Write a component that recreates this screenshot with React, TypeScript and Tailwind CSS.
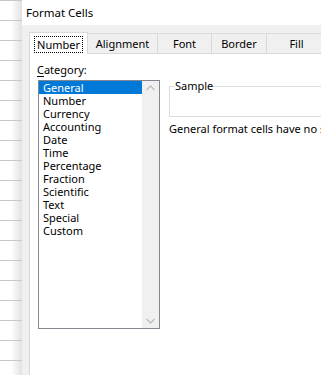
import React from 'react';

const categories = [
  'General', 'Number', 'Currency', 'Accounting', 'Date', 'Time',
  'Percentage', 'Fraction', 'Scientific', 'Text', 'Special', 'Custom',
];

const tabs = [
  { label: 'Number', w: 'w-[59px]' },
  { label: 'Alignment', w: 'w-[70px]' },
  { label: 'Font', w: 'w-[54px]' },
  { label: 'Border', w: 'w-[55px]' },
  { label: 'Fill', w: 'w-[60px]' },
];

const font = { fontFamily: '"Noto Sans", "Open Sans", sans-serif' };

export default function App() {
  return (
    <div className="w-[321px] h-[375px] flex overflow-hidden bg-white text-[11px] text-black" style={font}>
      {/* sheet behind the dialog */}
      <div className="w-[22px] shrink-0 flex flex-col bg-gradient-to-r from-white from-50% to-[#e2e2e2]">
        <div className="h-[3px] border-b border-[#c8c8c8]" />
        {Array.from({ length: 19 }).map((_, i) => (
          <div key={i} className="h-[20px] shrink-0 border-b border-[#c8c8c8]" />
        ))}
      </div>

      <div className="flex-1 flex flex-col min-w-0">
        {/* title bar */}
        <div className="h-[25px] shrink-0 bg-white pl-[4px] flex items-center text-[11.5px] leading-none">
          Format Cells
        </div>

        <div className="flex-1 flex flex-col bg-[#f0f0f0] pl-[7px] pt-[7px] min-h-0">
          {/* tab strip */}
          <div className="flex items-end h-[21px] shrink-0">
            {tabs.map((t, i) =>
              i === 0 ? (
                <div
                  key={t.label}
                  className={`${t.w} h-[22px] -mb-px relative z-10 bg-white border border-b-0 border-[#d9d9d9] flex items-start justify-center pt-[3px] shrink-0`}
                >
                  <span className="border border-dotted border-black px-[2px] h-[17px] flex items-center leading-none">
                    {t.label}
                  </span>
                </div>
              ) : (
                <div
                  key={t.label}
                  className={`${t.w} h-[20px] bg-[#f0f0f0] border-t border-r border-[#d9d9d9] flex items-center justify-center shrink-0 leading-none`}
                >
                  {t.label}
                </div>
              )
            )}
          </div>

          {/* tab page */}
          <div className="flex-1 bg-white border-t border-l border-[#d9d9d9] flex pl-[8px] pt-[8px] min-h-0">
            <div className="flex flex-col shrink-0">
              <div className="h-[16px] leading-[16px] -ml-px mb-[2px]">
                <span className="underline underline-offset-2">C</span>ategory:
              </div>
              <div className="w-[122px] h-[249px] border border-[#828790] flex">
                <div className="flex-1 flex flex-col">
                  {categories.map((c, i) => (
                    <div
                      key={c}
                      className={`h-[13px] leading-[13px] pl-[4px] ${i === 0 ? 'bg-[#0078d7] text-white' : ''}`}
                    >
                      {c}
                    </div>
                  ))}
                </div>
                <div className="w-[17px] bg-[#f0f0f0] flex flex-col items-center justify-between py-[4px]">
                  <svg width="9" height="6" viewBox="0 0 9 6">
                    <path d="M0.5 5 L4.5 1 L8.5 5" fill="none" stroke="#bfbfbf" strokeWidth="1.5" />
                  </svg>
                  <svg width="9" height="6" viewBox="0 0 9 6">
                    <path d="M0.5 1 L4.5 5 L8.5 1" fill="none" stroke="#bfbfbf" strokeWidth="1.5" />
                  </svg>
                </div>
              </div>
            </div>

            <div className="flex flex-col ml-[9px] mt-[24px] min-w-0 flex-1">
              <div className="relative h-[31px] border border-r-0 border-[#dcdcdc] w-[200px] shrink-0">
                <span className="absolute -top-[9px] left-[5px] bg-white leading-[16px]">Sample</span>
              </div>
              <div className="mt-[4px] leading-[16px] whitespace-nowrap">
                General format cells have no specific number format.
              </div>
            </div>
          </div>
        </div>
      </div>
    </div>
  );
}
